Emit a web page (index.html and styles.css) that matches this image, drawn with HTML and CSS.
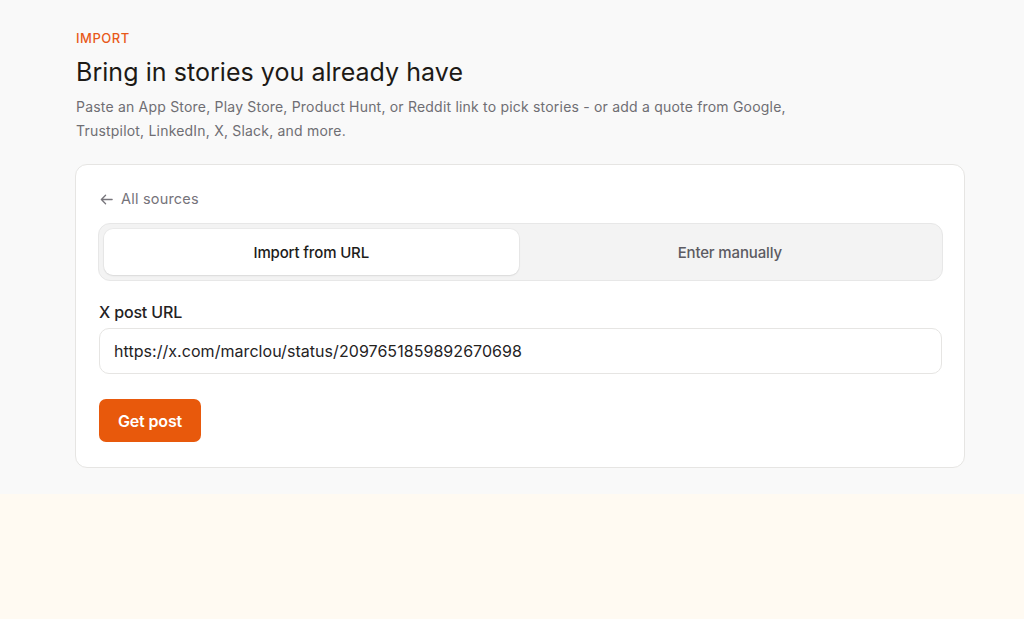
FILE: index.html
```html
<!DOCTYPE html>
<html lang="en">
<head>
<meta charset="utf-8">
<link rel="stylesheet" href="styles.css">
</head>
<body>
<section class="hero">
  <div class="wrap">
    <div class="eyebrow">IMPORT</div>
    <h1 class="title">Bring in stories you already have</h1>
    <p class="lead">Paste an App Store, Play Store, Product Hunt, or Reddit link to pick stories - or add a quote from Google, Trustpilot, LinkedIn, X, Slack, and more.</p>
    <div class="card">
      <a class="back" href="#">
        <svg class="back-icon" viewBox="0 0 16 16" width="15" height="15" fill="none" stroke="currentColor" stroke-width="1.4" stroke-linecap="round" stroke-linejoin="round"><path d="M14 8H2.5M7 3.5 2.5 8 7 12.5"/></svg>
        <span>All sources</span>
      </a>
      <div class="tabs">
        <div class="tab active">Import from URL</div>
        <div class="tab">Enter manually</div>
      </div>
      <label class="label">X post URL</label>
      <div class="input">https://x.com/marclou/status/2097651859892670698</div>
      <button class="btn">Get post</button>
    </div>
  </div>
</section>
</body>
</html>
```
FILE: styles.css
```css
* { box-sizing: border-box; }
html, body { margin: 0; padding: 0; }
body {
  background: #fffaf2;
  font-family: Inter, "Noto Sans", sans-serif;
  color: #1c1a17;
  height: 619px;
}
.hero {
  background: #f9f9f9;
  padding: 30px 0 26px 75px;
}
.wrap { width: 890px; }
.eyebrow {
  color: #e8591a;
  font-size: 13px;
  font-weight: 500;
  letter-spacing: 0.04em;
  line-height: 16px;
  padding-left: 1px;
}
.title {
  margin: 10px 0 0 1px;
  font-size: 25px;
  font-weight: 400;
  letter-spacing: 0.05px;
  line-height: 32px;
  color: #1d1a16;
}
.lead {
  margin: 7px 0 0 1px;
  font-size: 14px;
  line-height: 24px;
  color: #6f6e73;
  width: 760px;
  letter-spacing: 0.2px;
}
.card {
  margin-top: 21px;
  background: #fff;
  border: 1px solid #e6e5e3;
  border-radius: 12px;
  padding: 25px 22px 25px 23px;
  display: flex;
  flex-direction: column;
  align-items: stretch;
}
.back {
  display: flex;
  align-items: center;
  gap: 7px;
  color: #75737a;
  font-size: 14.5px;
  text-decoration: none;
  line-height: 18px;
  padding-left: 0;
  letter-spacing: 0.2px;
}
.back-icon { color: #77757b; }
.tabs {
  margin-top: 15px;
  display: grid;
  grid-template-columns: 1fr 1fr;
  gap: 4px;
  padding: 5px;
  background: #f3f3f3;
  border: 1px solid #e7e7e7;
  border-radius: 12px;
  margin-right: -1px;
  margin-left: -1px;
}
.tab {
  height: 46px;
  display: flex;
  align-items: center;
  justify-content: center;
  font-size: 15px;
  font-weight: 500;
  color: #5c5b62;
  border-radius: 9px;
  letter-spacing: -0.01em;
}
.tab.active {
  background: #fff;
  color: #1d1c1a;
  box-shadow: 0 1px 2px rgba(0,0,0,0.08), 0 0 0 1px rgba(0,0,0,0.03);
}
.label {
  margin-top: 21px;
  font-size: 16px;
  font-weight: 500;
  color: #24221f;
  line-height: 20px;
  letter-spacing: -0.01em;
}
.input {
  margin-top: 6px;
  height: 46px;
  border: 1px solid #e6e5e3;
  border-radius: 10px;
  display: flex;
  align-items: center;
  padding-left: 14px;
  font-size: 16px;
  color: #25231f;
  letter-spacing: 0.05px;
}
.btn {
  margin-top: 25px;
  align-self: flex-start;
  background: #e8590c;
  color: #fff;
  border: 0;
  border-radius: 7px;
  height: 43px;
  width: 102px;
  font-family: inherit;
  font-size: 16px;
  font-weight: 600;
  letter-spacing: -0.01em;
}
```
